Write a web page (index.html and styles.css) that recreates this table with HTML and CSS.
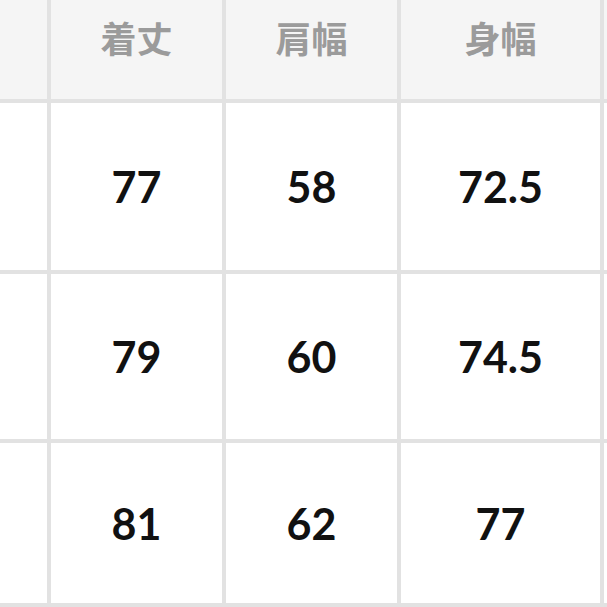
FILE: index.html
```html
<!DOCTYPE html>
<html lang="ja">
<head>
<meta charset="utf-8">
<title>サイズ表</title>
<link rel="stylesheet" href="styles.css">
</head>
<body>
<div class="size-table">
  <div class="cell head"></div>
  <div class="cell head">着丈</div>
  <div class="cell head">肩幅</div>
  <div class="cell head">身幅</div>
  <div class="cell head"></div>

  <div class="cell"></div>
  <div class="cell num">77</div>
  <div class="cell num">58</div>
  <div class="cell num">72.5</div>
  <div class="cell"></div>

  <div class="cell"></div>
  <div class="cell num">79</div>
  <div class="cell num">60</div>
  <div class="cell num">74.5</div>
  <div class="cell"></div>

  <div class="cell"></div>
  <div class="cell num">81</div>
  <div class="cell num">62</div>
  <div class="cell num">77</div>
  <div class="cell"></div>

  <div class="cell"></div>
  <div class="cell"></div>
  <div class="cell"></div>
  <div class="cell"></div>
  <div class="cell"></div>
</div>
</body>
</html>
```

FILE: styles.css
```css
html, body {
  margin: 0;
  padding: 0;
  background: #ffffff;
  overflow: hidden;
}

.size-table {
  display: grid;
  grid-template-columns: 47px 171px 171px 199px 20px;
  grid-template-rows: 99px 167px 165px 160px 20px;
  gap: 4px;
  background: #e2e2e2;
  width: 632px;
}

.cell {
  background: #ffffff;
  display: flex;
  align-items: center;
  justify-content: center;
}

.head {
  background: #f5f5f5;
  color: #9b9b9b;
  font-family: "Noto Sans CJK JP", "Noto Sans", sans-serif;
  font-weight: 700;
  font-size: 36px;
  line-height: 1;
  padding-bottom: 26px;
  box-sizing: border-box;
}

.num {
  color: #111111;
  font-family: Lato, "Liberation Sans", sans-serif;
  font-weight: 700;
  font-size: 43px;
  line-height: 1;
}
```
